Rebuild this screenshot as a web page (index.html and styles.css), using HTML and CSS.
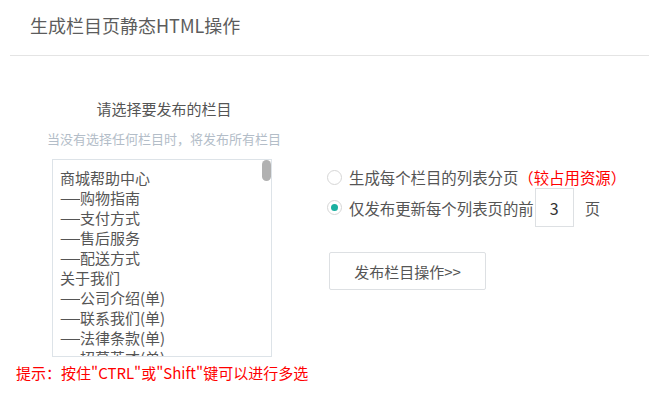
FILE: index.html
```html
<!DOCTYPE html>
<html lang="zh-CN">
<head>
<meta charset="utf-8">
<title>生成栏目页静态HTML操作</title>
<link rel="stylesheet" href="styles.css">
</head>
<body>
<div class="header">
  <h1 class="title">生成栏目页静态HTML操作</h1>
</div>
<div class="main">
  <div class="left">
    <div class="heading">请选择要发布的栏目</div>
    <div class="sub">当没有选择任何栏目时，将发布所有栏目</div>
    <div class="select">
      <ul class="options">
        <li>商城帮助中心</li>
        <li><span class="dash">——</span>购物指南</li>
        <li><span class="dash">——</span>支付方式</li>
        <li><span class="dash">——</span>售后服务</li>
        <li><span class="dash">——</span>配送方式</li>
        <li>关于我们</li>
        <li><span class="dash">——</span>公司介绍(单)</li>
        <li><span class="dash">——</span>联系我们(单)</li>
        <li><span class="dash">——</span>法律条款(单)</li>
        <li><span class="dash">——</span>招募英才(单)</li>
      </ul>
      <div class="thumb"></div>
    </div>
  </div>
  <div class="right">
    <label class="row">
      <span class="radio"></span>
      <span>生成每个栏目的列表分页</span><span class="warn">（较占用资源）</span>
    </label>
    <label class="row row-input">
      <span class="radio checked"></span>
      <span>仅发布更新每个列表页的前</span>
      <span class="num">3</span>
      <span class="unit">页</span>
    </label>
    <button class="btn" type="button">发布栏目操作&gt;&gt;</button>
  </div>
</div>
<div class="hint">提示：按住"CTRL"或"Shift"键可以进行多选</div>
</body>
</html>
```

FILE: styles.css
```css
html, body {
  margin: 0;
  padding: 0;
  background: #fff;
}
body {
  font-family: "Noto Sans CJK SC", "Noto Sans", sans-serif;
  color: #555;
  font-size: 15px;
  text-spacing-trim: space-all;
}
.header {
  margin-left: 10px;
  padding: 12px 0 17px 20px;
  border-bottom: 1px solid #e4e4e4;
}
.title {
  margin: 0;
  font-size: 18px;
  font-weight: normal;
  line-height: 26px;
  color: #5c5c5c;
}
.main {
  display: flex;
  padding-top: 43px;
}
.left {
  width: 240px;
  margin-left: 44px;
  display: flex;
  flex-direction: column;
  align-items: center;
}
.heading {
  font-size: 15px;
  line-height: 20px;
  color: #555;
}
.sub {
  margin-top: 11px;
  font-size: 13px;
  line-height: 18px;
  color: #b3bdc8;
}
.select {
  position: relative;
  margin-top: 11px;
  margin-right: 4px;
  width: 220px;
  height: 198px;
  box-sizing: border-box;
  border: 1px solid #dde3e8;
  overflow: hidden;
}
.options {
  list-style: none;
  margin: 0;
  padding: 8px 0 0 7px;
}
.options li {
  font-size: 15px;
  line-height: 20px;
  color: #555;
  white-space: nowrap;
}
.dash {
  display: inline-block;
  width: 20px;
  overflow: hidden;
  letter-spacing: -10px;
  vertical-align: top;
}
.thumb {
  position: absolute;
  top: 0;
  right: 0;
  width: 9px;
  height: 21px;
  border-radius: 5px;
  background: #b1b1b1;
}
.right {
  margin-left: 43px;
  padding-top: 68px;
  display: flex;
  flex-direction: column;
  align-items: flex-start;
}
.row {
  display: flex;
  align-items: center;
  line-height: 20px;
  font-size: 15.4px;
  color: #555;
}
.row-input {
  margin-top: 1px;
  height: 39px;
}
.radio {
  width: 13px;
  height: 13px;
  border: 1px solid #d6d6d6;
  border-radius: 50%;
  margin-right: 7px;
  position: relative;
  flex: none;
}
.radio.checked::after {
  content: "";
  position: absolute;
  left: 3px;
  top: 3px;
  width: 7px;
  height: 7px;
  border-radius: 50%;
  background: #1ab0a0;
}
.warn {
  color: #f00;
}
.num {
  width: 37px;
  height: 37px;
  border: 1px solid #dde0e3;
  margin-left: 1px;
  display: flex;
  align-items: center;
  justify-content: center;
  font-size: 16px;
  color: #333;
}
.unit {
  margin-left: 11px;
}
.btn {
  margin-top: 25px;
  margin-left: 2px;
  width: 157px;
  height: 38px;
  background: #fff;
  border: 1px solid #dde0e3;
  border-radius: 2px;
  font-family: inherit;
  font-size: 15px;
  color: #555;
  padding: 0;
}
.hint {
  margin-top: 6px;
  padding-left: 16px;
  font-size: 15px;
  line-height: 20px;
  color: #f00;
}
```
